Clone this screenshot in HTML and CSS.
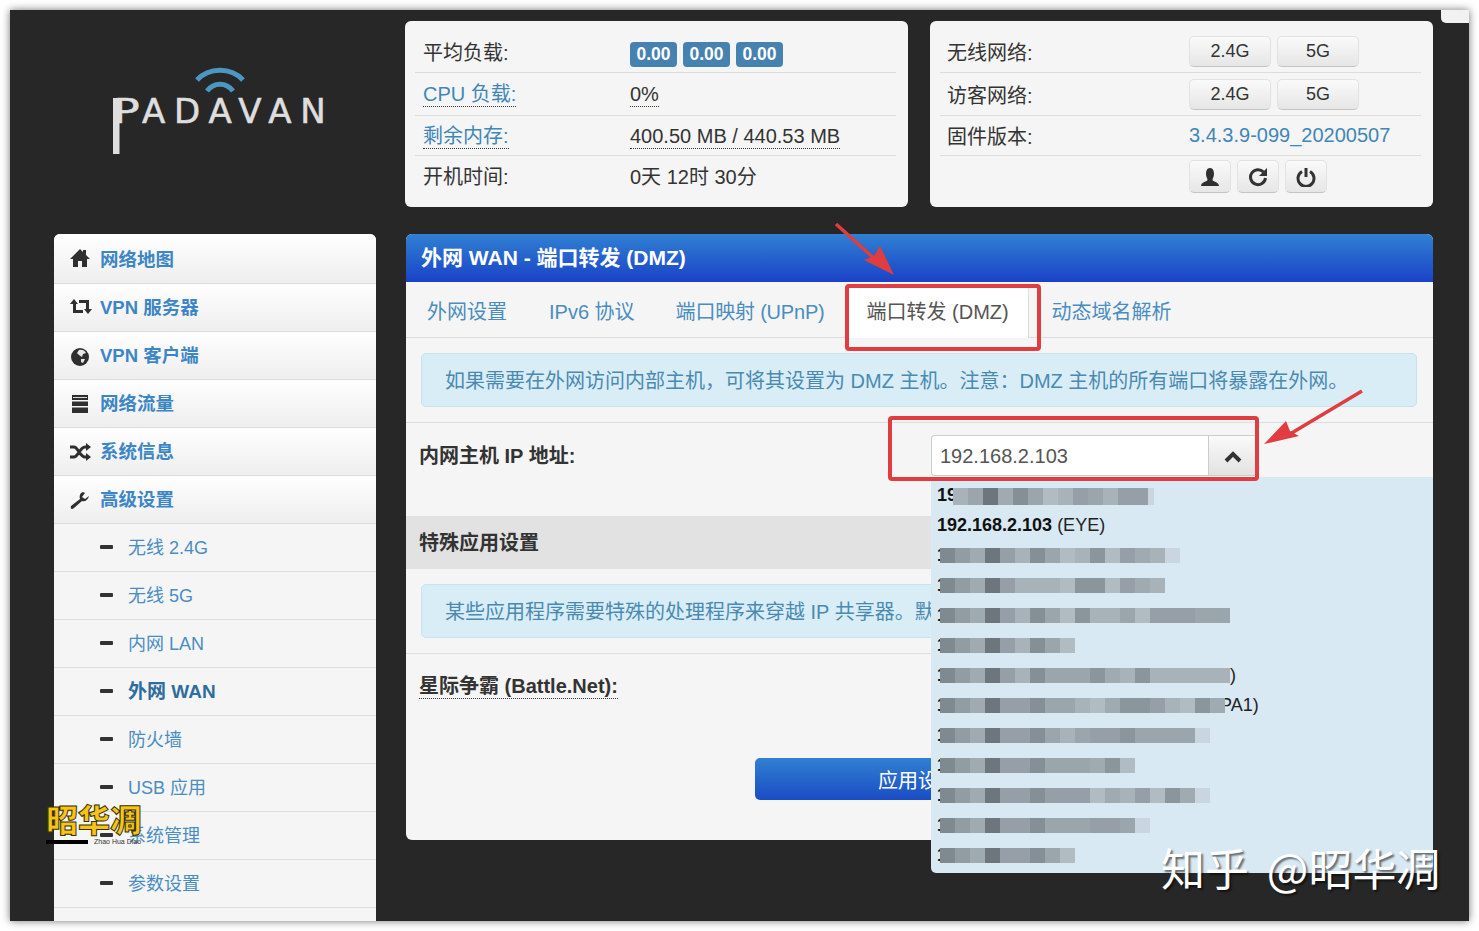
FILE: index.html
```html
<!DOCTYPE html>
<html lang="zh-CN">
<head>
<meta charset="utf-8">
<title>Padavan</title>
<link rel="stylesheet" href="styles.css">
</head>
<body>
<div class="frame">
  <div class="corner"></div>
  <header class="top">
    <div class="logo">
      <svg class="wifi" viewBox="0 0 50 26" width="50" height="26">
        <path d="M2 13 C14 0 36 0 48 13" fill="none" stroke="#4b97c2" stroke-width="5"/>
        <path d="M12 24 C19 15 31 15 38 24" fill="none" stroke="#4b97c2" stroke-width="5"/>
      </svg>
      <div class="wordmark"><span class="bigp">P</span>ADAVAN</div>
    </div>
    <section class="card">
      <div class="row"><span class="lab">平均负载:</span><span class="badges"><b class="badge">0.00</b><b class="badge">0.00</b><b class="badge">0.00</b></span></div>
      <div class="row"><span class="lab"><a class="dot link">CPU 负载:</a></span><span><a class="dot">0%</a></span></div>
      <div class="row"><span class="lab"><a class="dot link">剩余内存:</a></span><span><a class="dot">400.50 MB / 440.53 MB</a></span></div>
      <div class="row"><span class="lab">开机时间:</span><span>0天 12时 30分</span></div>
    </section>
    <section class="card card-right">
      <div class="row"><span class="lab">无线网络:</span><span class="btns"><button class="btn">2.4G</button><button class="btn">5G</button></span></div>
      <div class="row"><span class="lab">访客网络:</span><span class="btns"><button class="btn">2.4G</button><button class="btn">5G</button></span></div>
      <div class="row"><span class="lab">固件版本:</span><span class="link">3.4.3.9-099_20200507</span></div>
      <div class="row row-last"><span class="lab"></span><span class="btns">
        <button class="btn ibtn"><svg viewBox="0 0 20 18" width="20" height="18"><path fill="#2f2f2f" d="M10 0 C13 0 14 3 14 6 C14 9 12.500 10 12.500 12 C12.500 13.500 19 14 19 18 H1 C1 14 7.500 13.500 7.500 12 C7.500 10 6 9 6 6 C6 3 7 0 10 0Z"/></svg></button>
        <button class="btn ibtn"><svg viewBox="0 0 20 20" width="20" height="20"><path d="M15.500 5 A7.500 7.500 0 1 0 17.500 11" fill="none" stroke="#333" stroke-width="3"/><path fill="#333" d="M19 1 V9 H11 Z"/></svg></button>
        <button class="btn ibtn"><svg viewBox="0 0 20 20" width="20" height="20"><path d="M6 4.500 A8 8 0 1 0 14 4.500" fill="none" stroke="#333" stroke-width="3"/><path d="M10 1 V10" stroke="#333" stroke-width="3"/></svg></button>
      </span></div>
    </section>
  </header>

  <div class="main">
    <nav class="side">
      <a class="item"><svg class="ico" viewBox="0 0 20 18" width="20" height="18"><path fill="#2f2f2f" d="M10 0 L13 3 V1 H16 V6 L20 10 H17 V18 H12 V12 H8 V18 H3 V10 H0 Z"/></svg>网络地图</a>
      <a class="item"><svg class="ico" viewBox="0 0 22 15" width="22" height="15"><path fill="#2f2f2f" d="M4 0 L8 5 H6 V11 H13 V14 H3 V5 H0 Z M18 15 L14 10 H16 V4 H9 V1 H19 V10 H22 Z"/></svg>VPN 服务器</a>
      <a class="item"><svg class="ico" viewBox="0 0 20 20" width="20" height="20"><circle cx="10" cy="10" r="9" fill="#2f2f2f"/><path fill="#e8e8e8" d="M9 3 C11 2 15 3 16 6 L13 7 L12 10 L9 8 L7 6 Z M11 12 L15 12 L13 16 L11 15 Z"/></svg>VPN 客户端</a>
      <a class="item"><svg class="ico" viewBox="0 0 20 18" width="20" height="18"><path fill="#2f2f2f" d="M2 0 H18 V5 H2 Z M2 6.500 H18 V11 H2 Z M2 12.500 H18 V18 H2 Z"/><path fill="#ddd" d="M3 2 H17 V3 H3 Z"/></svg>网络流量</a>
      <a class="item"><svg class="ico" viewBox="0 0 21 18" width="21" height="18"><path d="M0 4 H4 C8 4 10 14 15 14 H17 M0 14 H4 C8 14 10 4 15 4 H17" fill="none" stroke="#2f2f2f" stroke-width="3"/><path fill="#2f2f2f" d="M16 0 L21 4 L16 8 Z M16 10 L21 14 L16 18 Z"/></svg>系统信息</a>
      <a class="item"><svg class="ico" viewBox="0 0 20 19" width="20" height="19"><path fill="#2f2f2f" d="M13 1 C10 2 9 5 10 8 L1 15 C0 18 2 19 4 17 L12 10 C15 11 18 9 19 5 L15 8 L12 6 L15 2 Z"/></svg>高级设置</a>
      <a class="sub"><i class="minus"></i>无线 2.4G</a>
      <a class="sub"><i class="minus"></i>无线 5G</a>
      <a class="sub"><i class="minus"></i>内网 LAN</a>
      <a class="sub sub-on"><i class="minus"></i>外网 WAN</a>
      <a class="sub"><i class="minus"></i>防火墙</a>
      <a class="sub"><i class="minus"></i>USB 应用</a>
      <a class="sub"><i class="minus"></i>系统管理</a>
      <a class="sub"><i class="minus"></i>参数设置</a>
    </nav>

    <section class="panel">
      <h1 class="head">外网 WAN - 端口转发 (DMZ)</h1>
      <div class="tabs">
        <a class="tab">外网设置</a><a class="tab">IPv6 协议</a><a class="tab">端口映射 (UPnP)</a><a class="tab tab-on">端口转发 (DMZ)</a><a class="tab tab-after">动态域名解析</a>
      </div>
      <div class="alert-wrap"><div class="alert">如果需要在外网访问内部主机，可将其设置为 DMZ 主机。注意：DMZ 主机的所有端口将暴露在外网。</div></div>
      <div class="field">
        <label class="flabel">内网主机 IP 地址:</label>
        <div class="combo"><div class="input">192.168.2.103</div><div class="addon"><svg viewBox="0 0 18 14" width="18" height="14"><path d="M2 12 L9 5 L16 12" fill="none" stroke="#333" stroke-width="4"/></svg></div></div>
      </div>
      <div class="section">特殊应用设置</div>
      <div class="alert-wrap alert-wrap-2"><div class="alert alert-clip">某些应用程序需要特殊的处理程序来穿越 IP 共享器。默</div></div>
      <div class="field field-2"><label class="flabel"><span class="dot">星际争霸 (Battle.Net):</span></label></div>
      <div class="actions"><button class="apply">应用设置</button></div>

      <ul class="drop">
        <li class="opt"><b>19</b><span class="mosaic m-first"><i class="f"></i><i class="h"></i><i class="d"></i><i class="c"></i><i class="g"></i><i class="h"></i><i class="j"></i><i class="f"></i><i class="e"></i><i class="h"></i><i class="f"></i><i class="e"></i><i class="e"></i><i class="l"></i></span></li>
        <li class="opt"><b>192.168.2.103</b> (EYE)</li>
        <li class="opt"><b>1</b><span class="mosaic"><i class="a"></i><i class="b"></i><i class="c"></i><i class="d"></i><i class="e"></i><i class="f"></i><i class="g"></i><i class="h"></i><i class="j"></i><i class="f"></i><i class="k"></i><i class="j"></i><i class="e"></i><i class="c"></i><i class="f"></i><i class="l"></i></span></li>
        <li class="opt"><b>1</b><span class="mosaic"><i class="a"></i><i class="b"></i><i class="c"></i><i class="d"></i><i class="e"></i><i class="f"></i><i class="f"></i><i class="f"></i><i class="j"></i><i class="k"></i><i class="k"></i><i class="j"></i><i class="e"></i><i class="c"></i><i class="f"></i></span></li>
        <li class="opt"><b>1</b><span class="mosaic"><i class="a"></i><i class="b"></i><i class="c"></i><i class="d"></i><i class="e"></i><i class="f"></i><i class="g"></i><i class="h"></i><i class="j"></i><i class="k"></i><i class="f"></i><i class="f"></i><i class="h"></i><i class="j"></i><i class="e"></i><i class="e"></i><i class="e"></i><i class="h"></i><i class="h wide"></i></span></li>
        <li class="opt"><b>1</b><span class="mosaic"><i class="a"></i><i class="b"></i><i class="c"></i><i class="d"></i><i class="e"></i><i class="f"></i><i class="g"></i><i class="h"></i><i class="j"></i></span></li>
        <li class="opt"><b>1</b><span class="tail tail-a">)</span><span class="mosaic"><i class="a"></i><i class="b"></i><i class="c"></i><i class="d"></i><i class="e"></i><i class="f"></i><i class="g"></i><i class="h"></i><i class="h"></i><i class="h"></i><i class="k"></i><i class="c"></i><i class="f"></i><i class="k"></i><i class="f"></i><i class="f"></i><i class="f"></i><i class="f"></i><i class="f wide"></i></span></li>
        <li class="opt"><b>1</b><span class="tail tail-b">PA1)</span><span class="mosaic"><i class="a"></i><i class="b"></i><i class="c"></i><i class="d"></i><i class="e"></i><i class="e"></i><i class="g"></i><i class="h"></i><i class="h"></i><i class="f"></i><i class="j"></i><i class="c"></i><i class="k"></i><i class="k"></i><i class="e"></i><i class="f"></i><i class="j"></i><i class="k"></i><i class="c"></i></span></li>
        <li class="opt"><b>1</b><span class="mosaic"><i class="a"></i><i class="b"></i><i class="c"></i><i class="d"></i><i class="e"></i><i class="e"></i><i class="g"></i><i class="h"></i><i class="f"></i><i class="h"></i><i class="e"></i><i class="e"></i><i class="k"></i><i class="h"></i><i class="h"></i><i class="h"></i><i class="h"></i><i class="l"></i></span></li>
        <li class="opt"><b>1</b><span class="mosaic"><i class="a"></i><i class="b"></i><i class="c"></i><i class="d"></i><i class="e"></i><i class="e"></i><i class="g"></i><i class="h"></i><i class="h"></i><i class="h"></i><i class="c"></i><i class="k"></i><i class="j"></i></span></li>
        <li class="opt"><b>1</b><span class="mosaic"><i class="a"></i><i class="b"></i><i class="c"></i><i class="d"></i><i class="e"></i><i class="e"></i><i class="g"></i><i class="e"></i><i class="e"></i><i class="e"></i><i class="j"></i><i class="c"></i><i class="f"></i><i class="e"></i><i class="j"></i><i class="k"></i><i class="c"></i><i class="l"></i></span></li>
        <li class="opt"><b>1</b><span class="mosaic"><i class="a"></i><i class="b"></i><i class="c"></i><i class="d"></i><i class="e"></i><i class="e"></i><i class="g"></i><i class="h"></i><i class="h"></i><i class="h"></i><i class="e"></i><i class="e"></i><i class="h"></i><i class="l"></i></span></li>
        <li class="opt"><b>1</b><span class="mosaic"><i class="a"></i><i class="b"></i><i class="c"></i><i class="d"></i><i class="e"></i><i class="e"></i><i class="g"></i><i class="h"></i><i class="j"></i></span></li>
      </ul>
    </section>
  </div>

  <div class="mark box-a"></div>
  <div class="mark box-b"></div>
  <svg class="arrows" viewBox="0 0 1459 911" width="1459" height="911">
    <path d="M826 214 L868 252" stroke="#df3d3f" stroke-width="3.500" fill="none"/>
    <path fill="#df3d3f" d="M884 265 L854 250 L864 246 L870 236 Z"/>
    <path d="M1352 381 L1280 424" stroke="#df3d3f" stroke-width="3.500" fill="none"/>
    <path fill="#df3d3f" d="M1254 434 L1276 411 L1280 421 L1289 426 Z"/>
  </svg>
  <div class="brand"><span class="brand-zh">昭华凋</span><span class="brand-en"><i class="brand-bar"></i>Zhao Hua Diao</span></div>
  <div class="zhihu">知乎 @昭华凋</div>
</div>
</body>
</html>
```
FILE: styles.css
```css
* { box-sizing: border-box; }
html, body { margin: 0; height: 931px; overflow: hidden; background: #fff; }
body {
  font-family: "Liberation Sans", "Noto Sans CJK SC", sans-serif;
  font-size: 20px;
  color: #333;
}
a { color: inherit; text-decoration: none; }
.frame {
  position: relative;
  width: 1459px;
  height: 911px;
  margin: 10px;
  background: #272727;
  overflow: hidden;
  box-shadow: 0 0 8px rgba(0,0,0,.55);
}
.corner {
  position: absolute;
  right: 0; top: 0;
  width: 28px; height: 13px;
  background: #f1f1f1;
  border-bottom-left-radius: 5px;
}

/* top */
.top { display: flex; padding-top: 11px; height: 197px; }
.logo { width: 395px; padding: 46px 0 0 103px; flex: none; }
.wifi { display: block; margin-left: 82px; }
.wordmark {
  margin-top: 0;
  font-family: "DejaVu Sans", sans-serif;
  font-size: 34px;
  line-height: 36px;
  letter-spacing: 8.800px;
  color: #dedede;
  -webkit-text-stroke: .6px #dedede;
  white-space: nowrap;
}
.bigp {
  position: relative;
  display: inline-block;
  width: 29px;
  letter-spacing: 0;
  transform: scaleX(1.3);
  transform-origin: left center;
}
.bigp::after {
  content: "";
  position: absolute;
  left: 0; top: 5px;
  width: 4.500px; height: 56px;
  background: #dedede;
}
.card {
  width: 503px;
  height: 186px;
  flex: none;
  padding: 10px 12px 9px 10px;
  background: #f5f5f5;
  border-radius: 6px;
  display: grid;
  grid-template-rows: 42px 43px 40px 41px;
}
.card-right { margin-left: 22px; }
.row {
  display: flex;
  align-items: center;
  padding-left: 8px;
  border-bottom: 1px solid #ddd;
  white-space: nowrap;
}
.card-right .row { padding-left: 7px; }
.card:not(.card-right) .row:nth-child(3) { padding-top: 2px; }
.card:not(.card-right) .row:nth-child(4) { padding-bottom: 2px; }
.row:last-child { border-bottom: 0; }
.lab { width: 207px; flex: none; }
.card-right .lab { width: 242px; }
.link { color: #3f87b8; }
.dot { border-bottom: 1px dotted #333; line-height: 24px; display: inline-block; }
.badges { display: flex; gap: 6px; margin-top: 5px; }
.badge {
  display: block;
  width: 47px;
  height: 25px;
  line-height: 25px;
  text-align: center;
  font-size: 17.500px;
  color: #fff;
  background: #4682b0;
  border-radius: 4px;
}
.btns { display: flex; gap: 6px; }
.btn {
  width: 82px;
  height: 31px;
  padding: 0;
  font: inherit;
  font-size: 18px;
  color: #333;
  border: 1px solid #e2e2e2;
  border-bottom-color: #c4c4c4;
  border-radius: 5px;
  background: linear-gradient(#fafafa, #e6e6e6);
  display: flex;
  align-items: center;
  justify-content: center;
}
.ibtn { width: 42px; height: 33px; }

/* main */
.main { display: flex; padding-left: 44px; margin-top: 27px; align-items: flex-start; }
.side {
  width: 322px;
  height: 690px;
  flex: none;
  background: #f5f5f5;
  border-radius: 6px 6px 0 0;
  overflow: hidden;
}
.item, .sub {
  display: flex;
  align-items: center;
  height: 48px;
  border-bottom: 1px solid #dcdcdc;
  white-space: nowrap;
  font-size: 18px;
  color: #4a8dc2;
}
.item {
  font-size: 18.500px;
  font-weight: 700;
  color: #3d86c6;
  padding: 0 0 4px 46px;
  position: relative;
  background: linear-gradient(#fff, #eee);
}
.ico { position: absolute; left: 16px; top: 15px; }
.item:first-child { height: 50px; padding-bottom: 1px; }
.sub { padding-left: 46px; padding-bottom: 4px; color: #4a8dc2; }
.sub-on { font-size: 19px; font-weight: 700; color: #2f6d9e; }
.minus {
  width: 13px; height: 4px;
  margin-right: 15px;
  background: #333;
  border-radius: 1px;
  margin-top: 2px;
}
.panel {
  position: relative;
  width: 1027px;
  height: 606px;
  margin-left: 30px;
  background: #f5f5f5;
  border-radius: 6px;
  flex: none;
}
.head {
  margin: 0;
  height: 48px;
  padding-left: 15px;
  font-size: 21px;
  line-height: 48px;
  font-weight: 700;
  color: #fff;
  border-radius: 6px 6px 0 0;
  background: linear-gradient(#3180d2, #1a42c8);
}
.tabs {
  display: flex;
  height: 56px;
  padding-left: 21px;
  border-bottom: 1px solid #ddd;
  white-space: nowrap;
}
.tab {
  color: #4a8dc0;
  padding-top: 18px;
  margin-right: 42px;
  line-height: 24px;
}
.tab:nth-child(3) { margin-left: -1px; letter-spacing: -.2px; }
.tab-on {
  margin: 4px 0 -1px -20px;
  width: 182px;
  padding: 14px 0 0 20px;
  color: #555;
  background: #fff;
  border-right: 1px solid #ddd;
  border-radius: 4px 4px 0 0;
}
.tab-after { margin-left: 23px; }
.alert-wrap {
  padding: 15px 16px 15px 15px;
  border-bottom: 1px solid #ddd;
}
.alert {
  height: 54px;
  padding-left: 23px;
  line-height: 54px;
  color: #4a8ab0;
  background: #d9edf7;
  border: 1px solid #c6e3ef;
  border-radius: 5px;
  white-space: nowrap;
  overflow: hidden;
}
.field { display: flex; height: 93px; padding: 12px 0 0 13px; }
.field-2 { height: 104px; padding-top: 11px; }
.flabel { width: 512px; flex: none; font-weight: 700; line-height: 42px; color: #333; }
.flabel .dot { line-height: 24px; }
.combo { display: flex; height: 41px; width: 327px; }
.input {
  width: 277px;
  padding-left: 8px;
  line-height: 41px;
  color: #555;
  background: #fff;
  border: 1px solid #ccc;
  border-right: 0;
  border-radius: 4px 0 0 4px;
}
.addon {
  width: 50px;
  display: flex;
  align-items: center;
  justify-content: center;
  background: linear-gradient(#fafafa, #e2e2e2);
  border: 1px solid #ccc;
}
.section {
  height: 53px;
  padding-left: 13px;
  line-height: 54px;
  font-weight: 700;
  background: #e2e2e2;
}
.actions { display: flex; justify-content: center; }
.apply {
  width: 329px;
  height: 42px;
  padding: 0 3px 0 0;
  font: inherit;
  color: #fff;
  border: 0;
  border-radius: 5px;
  background: linear-gradient(#3180d2, #1a4cc4);
}
.drop {
  position: absolute;
  left: 525px;
  top: 243px;
  width: 502px;
  height: 396px;
  margin: 0;
  padding: 3px 0 0;
  list-style: none;
  background: #d8e9f4;
  border-radius: 0 0 5px 5px;
  overflow: hidden;
}
.opt {
  position: relative;
  height: 30px;
  padding-left: 6px;
  font-size: 18px;
  line-height: 30px;
  color: #222;
  white-space: nowrap;
}
.opt b { color: #111; }
.mosaic {
  position: absolute;
  left: 9px;
  top: 8px;
  display: flex;
  height: 15px;
}
.m-first { left: 22px; top: 8px; height: 17px; }
.m-first i:last-child { width: 6px; }
.mosaic i { width: 15px; flex: none; }
.mosaic .wide { width: 20px; }
.a { background: #7f8990; }
.b { background: #929ca3; }
.c { background: #a0aab1; }
.d { background: #6d767d; }
.e { background: #969fa7; }
.f { background: #a8b2b9; }
.g { background: #858f96; }
.h { background: #9ba5ac; }
.j { background: #b1bbc2; }
.k { background: #8b959c; }
.l { background: #c9d6df; }
.tail { position: absolute; top: 0; }
.tail-a { left: 299px; }
.tail-b { left: 289px; }

/* overlays */
.mark {
  position: absolute;
  border: 4px solid #df3d3f;
  border-radius: 4px;
}
.box-a { left: 835px; top: 274px; width: 196px; height: 67px; }
.box-b { left: 878px; top: 406px; width: 371px; height: 65px; }
.arrows { position: absolute; left: 0; top: 0; }
.brand {
  position: absolute;
  left: 36px;
  top: 788px;
  width: 100px;
}
.brand-zh {
  display: block;
  font-family: "Noto Sans CJK SC", sans-serif;
  font-weight: 900;
  font-size: 32px;
  line-height: 40px;
  color: #f6c417;
  -webkit-text-stroke: 1px #3a3000;
  white-space: nowrap;
}
.brand-en {
  display: flex;
  align-items: center;
  font-size: 7px;
  line-height: 8px;
  color: #333;
  white-space: nowrap;
}
.brand-bar {
  width: 42px;
  height: 4px;
  margin-right: 6px;
  background: #000;
}
.zhihu {
  position: absolute;
  left: 1151px;
  top: 829px;
  font-family: "Noto Sans CJK SC", sans-serif;
  font-weight: 400;
  font-size: 44px;
  line-height: 56px;
  word-spacing: 8px;
  color: #fff;
  white-space: nowrap;
  text-shadow: 2px 2px 2px rgba(0,0,0,.55);
}
```
